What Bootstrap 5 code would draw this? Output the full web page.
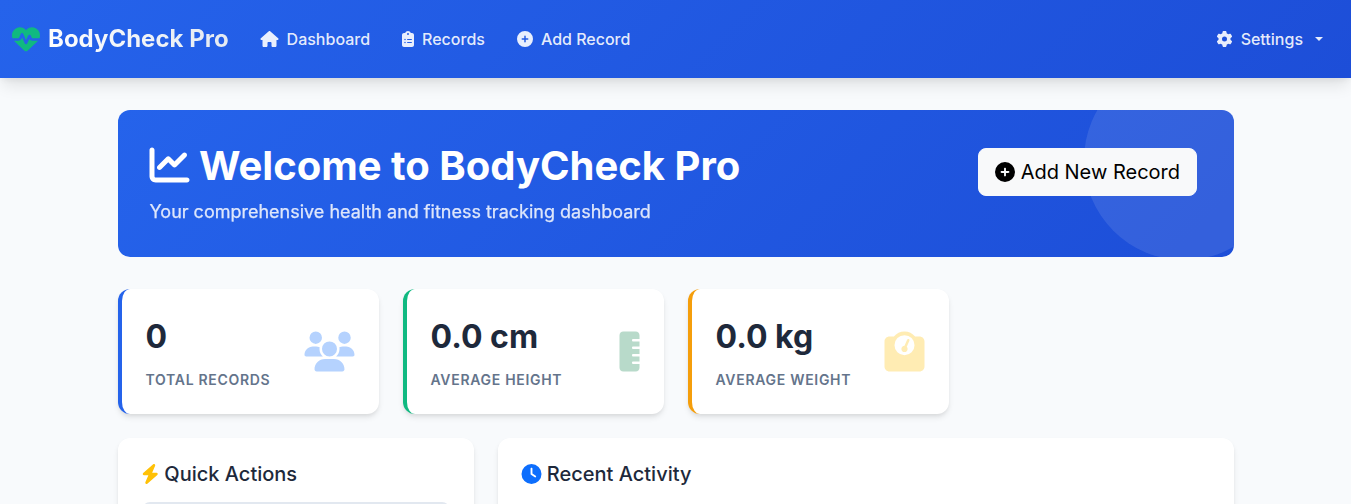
<!DOCTYPE html>
<html lang="en">
<head>
<meta charset="utf-8">
<meta name="viewport" content="width=device-width, initial-scale=1">
<title>BodyCheck Pro</title>
<link href="https://cdn.jsdelivr.net/npm/bootstrap@5.3.0/dist/css/bootstrap.min.css" rel="stylesheet">
<style>
  body { font-family: Inter, "Liberation Sans", sans-serif; background: #f8fafc; color: #1e293b; overflow: hidden; height: 100vh; }
  .ico { height: 1em; width: auto; fill: currentColor; vertical-align: -.125em; overflow: visible; }
  h1 .ico, h5 .ico, .ico.nudge { transform: translateX(-.5px); }
  .app-nav { height: 78px; background: linear-gradient(135deg, #2563eb, #1d4ed8); box-shadow: 0 10px 15px -3px rgba(0,0,0,.1), 0 4px 6px -2px rgba(0,0,0,.05); }
  .app-nav .navbar-brand { font-size: 24px; font-weight: 700; }
  .app-nav .navbar-brand .ico { font-size: 28px; color: #10b981; }
  .brand-text { background: linear-gradient(45deg, #fff, #e2e8f0); -webkit-background-clip: text; background-clip: text; color: transparent; }
  .app-nav .nav-link { color: rgba(255,255,255,.9); font-weight: 500; padding: 8px 16px !important; }
  .app-nav .dropdown-toggle::after { margin-left: 12px; vertical-align: .255em; }
  .hero { background: linear-gradient(135deg, #2563eb, #1d4ed8); border-radius: 12px; padding: 32px; margin: 32px 0; color: #fff; position: relative; overflow: hidden; }
  .hero::before { content: ""; position: absolute; top: -50px; right: -50px; width: 200px; height: 200px; border-radius: 50%; background: rgba(255,255,255,.1); }
  .hero h1 { font-size: 40px; font-weight: 700; }
  .hero-sub { font-size: 18px; opacity: .85; -webkit-text-stroke: .25px currentColor; }
  .hero .btn { margin: 6px 4.5px 0 0; position: relative; }
  .panel { background: #fff; border: 0; border-radius: 12px; box-shadow: 0 4px 6px -1px rgba(0,0,0,.1), 0 2px 4px -1px rgba(0,0,0,.06); }
  .panel .card-body { padding: 24px; }
  .stat { border-left: 4px solid #2563eb; }
  .stat.green { border-left-color: #10b981; }
  .stat.amber { border-left-color: #f59e0b; }
  .stat-num { font-size: 32px; font-weight: 700; line-height: 48px; }
  .stat-label { font-size: 14px; line-height: 21px; font-weight: 600; letter-spacing: .05em; color: #64748b; text-transform: uppercase; margin-top: 8px; }
  .stat .ico { font-size: 40px; opacity: .3; transform: translate(-.5px, -.6px); }
  .panel h5 { font-size: 20px; margin-bottom: 16px; }
  .action { border-radius: 8px; border: 2px solid #e2e8f0; height: 48px; }
</style>
</head>
<body>
<nav class="navbar navbar-expand navbar-dark app-nav py-0">
  <div class="container-fluid">
    <a class="navbar-brand d-flex align-items-center gap-2" href="#">
      <svg class="ico" viewBox="0 0 512 512"><path d="M228.3 469.1L47.6 300.4c-4.2-3.9-8.2-8.1-11.9-12.4h87c22.6 0 43-13.6 51.7-34.5l10.5-25.2 49.3 109.5c3.8 8.5 12.1 14 21.4 14.1s17.8-5 22-13.3L320 253.7l1.7 3.4c9.5 19 28.9 31 50.1 31H476.3c-3.7 4.3-7.7 8.5-11.9 12.4L283.7 469.1c-7.5 7-17.4 10.9-27.7 10.9s-20.2-3.9-27.7-10.9zM503.7 240h-132c-3 0-5.8-1.7-7.2-4.4l-23.2-46.3c-4.1-8.1-12.4-13.3-21.5-13.3s-17.4 5.1-21.5 13.3l-41.4 82.8L205.9 158.2c-3.9-8.7-12.7-14.3-22.2-14.1s-18.1 5.9-21.8 14.8l-31.8 76.3c-1.2 3-4.2 4.9-7.4 4.9H16c-2.6 0-5 .4-7.3 1.1C3 225.2 0 208.2 0 190.9v-5.8c0-69.9 50.5-129.5 119.4-141C165 36.5 211.4 51.4 244 84l12 12 12-12c32.6-32.6 79-47.5 124.6-39.9C461.5 55.6 512 115.2 512 185.1v5.8c0 16.9-2.8 33.5-8.3 49.1z"/></svg>
      <span class="brand-text">BodyCheck Pro</span>
    </a>
    <ul class="navbar-nav me-auto">
      <li class="nav-item"><a class="nav-link" href="#"><svg class="ico nudge me-2" viewBox="0 0 576 512"><path d="M575.8 255.5c0 18-15 32.1-32 32.1h-32l.7 160.2c0 2.7-.2 5.4-.5 8.1V472c0 22.1-17.9 40-40 40H456c-1.1 0-2.2 0-3.3-.1c-1.4 .1-2.8 .1-4.2 .1H416 392c-22.1 0-40-17.9-40-40V448 384c0-17.7-14.3-32-32-32H256c-17.7 0-32 14.3-32 32v64 24c0 22.1-17.9 40-40 40H160 128.1c-1.5 0-3-.1-4.5-.2c-1.2 .1-2.4 .2-3.6 .2H104c-22.1 0-40-17.9-40-40V360c0-.9 0-1.9 .1-2.8V287.6H32c-18 0-32-14-32-32.1c0-9 3-17 10-24L266.4 8c7-7 15-8 22-8s15 2 21 7L564.8 231.5c8 7 12 15 11 24z"/></svg>Dashboard</a></li>
      <li class="nav-item"><a class="nav-link" href="#"><svg class="ico me-2" viewBox="0 0 384 512"><path d="M192 0c-41.8 0-77.4 26.7-90.5 64H64C28.7 64 0 92.7 0 128V448c0 35.3 28.7 64 64 64H320c35.3 0 64-28.7 64-64V128c0-35.3-28.7-64-64-64H282.5C269.4 26.7 233.8 0 192 0zm0 64a32 32 0 1 1 0 64 32 32 0 1 1 0-64zM72 272a24 24 0 1 1 48 0 24 24 0 1 1 -48 0zm104-16H304c8.8 0 16 7.2 16 16s-7.2 16-16 16H176c-8.8 0-16-7.2-16-16s7.2-16 16-16zM72 368a24 24 0 1 1 48 0 24 24 0 1 1 -48 0zm88 0c0-8.8 7.2-16 16-16H304c8.8 0 16 7.2 16 16s-7.2 16-16 16H176c-8.8 0-16-7.2-16-16z"/></svg>Records</a></li>
      <li class="nav-item"><a class="nav-link" href="#"><svg class="ico me-2" viewBox="0 0 512 512"><path d="M256 512A256 256 0 1 0 256 0a256 256 0 1 0 0 512zM232 344V280H168c-13.3 0-24-10.7-24-24s10.7-24 24-24h64V168c0-13.3 10.7-24 24-24s24 10.7 24 24v64h64c13.3 0 24 10.7 24 24s-10.7 24-24 24H280v64c0 13.3-10.7 24-24 24s-24-10.7-24-24z"/></svg>Add Record</a></li>
    </ul>
    <ul class="navbar-nav">
      <li class="nav-item dropdown"><a class="nav-link dropdown-toggle" href="#" data-bs-toggle="dropdown"><svg class="ico nudge me-2" viewBox="0 0 512 512"><path d="M495.9 166.6c3.2 8.7 .5 18.4-6.4 24.6l-43.3 39.4c1.1 8.3 1.7 16.8 1.7 25.4s-.6 17.1-1.7 25.4l43.3 39.4c6.9 6.2 9.6 15.9 6.4 24.6c-4.4 11.9-9.7 23.3-15.8 34.3l-4.7 8.1c-6.6 11-14 21.4-22.1 31.2c-5.9 7.2-15.7 9.6-24.5 6.8l-55.7-17.7c-13.4 10.3-28.2 18.9-44 25.4l-12.5 57.1c-2 9.1-9 16.3-18.2 17.8c-13.8 2.3-28 3.5-42.5 3.5s-28.7-1.2-42.5-3.5c-9.2-1.5-16.2-8.7-18.2-17.8l-12.5-57.1c-15.8-6.5-30.6-15.1-44-25.4L83.1 425.9c-8.8 2.8-18.6 .3-24.5-6.8c-8.1-9.8-15.5-20.2-22.1-31.2l-4.7-8.1c-6.1-11-11.4-22.4-15.8-34.3c-3.2-8.7-.5-18.4 6.4-24.6l43.3-39.4C64.6 273.1 64 264.6 64 256s.6-17.1 1.7-25.4L22.4 191.2c-6.9-6.2-9.6-15.9-6.4-24.6c4.4-11.9 9.7-23.3 15.8-34.3l4.7-8.1c6.6-11 14-21.4 22.1-31.2c5.9-7.2 15.7-9.6 24.5-6.8l55.7 17.7c13.4-10.3 28.2-18.9 44-25.4l12.5-57.1c2-9.1 9-16.3 18.2-17.8C227.3 1.2 241.5 0 256 0s28.7 1.2 42.5 3.5c9.2 1.5 16.2 8.7 18.2 17.8l12.5 57.1c15.8 6.5 30.6 15.1 44 25.4l55.7-17.7c8.8-2.8 18.6-.3 24.5 6.8c8.1 9.8 15.5 20.2 22.1 31.2l4.7 8.1c6.1 11 11.4 22.4 15.8 34.3zM256 336a80 80 0 1 0 0-160 80 80 0 1 0 0 160z"/></svg>Settings</a></li>
    </ul>
  </div>
</nav>

<main class="container">
  <section class="hero d-flex justify-content-between align-items-start">
    <div>
      <h1 class="mb-2"><svg class="ico" viewBox="0 0 512 512"><path d="M64 64c0-17.7-14.3-32-32-32S0 46.3 0 64V400c0 44.2 35.8 80 80 80H480c17.7 0 32-14.3 32-32s-14.3-32-32-32H80c-8.8 0-16-7.2-16-16V64zm406.6 86.6c12.5-12.5 12.5-32.8 0-45.3s-32.8-12.5-45.3 0L320 210.7l-57.4-57.4c-12.5-12.5-32.8-12.5-45.3 0l-112 112c-12.5 12.5-12.5 32.8 0 45.3s32.8 12.5 45.3 0L240 221.3l57.4 57.4c12.5 12.5 32.8 12.5 45.3 0l128-128z"/></svg> Welcome to BodyCheck Pro</h1>
      <p class="hero-sub mb-0">Your comprehensive health and fitness tracking dashboard</p>
    </div>
    <a class="btn btn-light btn-lg" href="#"><svg class="ico" viewBox="0 0 512 512"><path d="M256 512A256 256 0 1 0 256 0a256 256 0 1 0 0 512zM232 344V280H168c-13.3 0-24-10.7-24-24s10.7-24 24-24h64V168c0-13.3 10.7-24 24-24s24 10.7 24 24v64h64c13.3 0 24 10.7 24 24s-10.7 24-24 24H280v64c0 13.3-10.7 24-24 24s-24-10.7-24-24z"/></svg> Add New Record</a>
  </section>

  <div class="row g-4 mb-4">
    <div class="col-3">
      <div class="card panel stat"><div class="card-body d-flex justify-content-between align-items-center">
        <div><div class="stat-num">0</div><div class="stat-label">Total Records</div></div>
        <svg class="ico text-primary" viewBox="0 0 640 512"><path d="M144 0a80 80 0 1 1 0 160A80 80 0 1 1 144 0zM512 0a80 80 0 1 1 0 160A80 80 0 1 1 512 0zM0 298.7C0 239.8 47.8 192 106.7 192h42.7c15.9 0 31 3.5 44.6 9.7c-1.3 7.2-1.9 14.7-1.9 22.3c0 38.2 16.8 72.5 43.3 96c-.2 0-.4 0-.7 0H21.3C9.6 320 0 310.4 0 298.7zM405.3 320c-.2 0-.4 0-.7 0c26.6-23.5 43.3-57.8 43.3-96c0-7.6-.7-15-1.9-22.3c13.6-6.3 28.7-9.7 44.6-9.7h42.7C592.2 192 640 239.8 640 298.7c0 11.8-9.6 21.3-21.3 21.3H405.3zM224 224a96 96 0 1 1 192 0 96 96 0 1 1 -192 0zM128 485.3C128 411.7 187.7 352 261.3 352H378.7C452.3 352 512 411.7 512 485.3c0 14.7-11.9 26.7-26.7 26.7H154.7c-14.7 0-26.7-11.9-26.7-26.7z"/></svg>
      </div></div>
    </div>
    <div class="col-3">
      <div class="card panel stat green"><div class="card-body d-flex justify-content-between align-items-center">
        <div><div class="stat-num">0.0 cm</div><div class="stat-label">Average Height</div></div>
        <svg class="ico text-success" viewBox="0 0 256 512"><path d="M0 48C0 21.5 21.5 0 48 0H208c26.5 0 48 21.5 48 48V96H176c-8.8 0-16 7.2-16 16s7.2 16 16 16h80v64H176c-8.8 0-16 7.2-16 16s7.2 16 16 16h80v64H176c-8.8 0-16 7.2-16 16s7.2 16 16 16h80v64H176c-8.8 0-16 7.2-16 16s7.2 16 16 16h80v48c0 26.5-21.5 48-48 48H48c-26.5 0-48-21.5-48-48V48z"/></svg>
      </div></div>
    </div>
    <div class="col-3">
      <div class="card panel stat amber"><div class="card-body d-flex justify-content-between align-items-center">
        <div><div class="stat-num">0.0 kg</div><div class="stat-label">Average Weight</div></div>
        <svg class="ico text-warning" viewBox="0 0 512 512"><path d="M128 176a128 128 0 1 1 256 0 128 128 0 1 1 -256 0zM391.8 64C359.5 24.9 310.7 0 256 0S152.5 24.9 120.2 64H64C28.7 64 0 92.7 0 128V448c0 35.3 28.7 64 64 64H448c35.3 0 64-28.7 64-64V128c0-35.3-28.7-64-64-64H391.8zM296 224c0-10.6-4.1-20.2-10.9-27.4l33.6-78.3c3.5-8.1-.3-17.5-8.4-21s-17.5 .3-21 8.4L255.7 184c-22 .1-39.7 18-39.7 40c0 22.1 17.9 40 40 40s40-17.9 40-40z"/></svg>
      </div></div>
    </div>
  </div>

  <div class="row g-4">
    <div class="col-4">
      <div class="card panel h-100"><div class="card-body">
        <h5><svg class="ico text-warning" viewBox="0 0 448 512"><path d="M349.4 44.6c5.9-13.7 1.5-29.7-10.6-38.5s-28.6-8-39.9 1.8l-256 224c-10 8.8-13.6 22.9-8.9 35.3S50.7 288 64 288H175.5L98.6 467.4c-5.9 13.7-1.5 29.7 10.6 38.5s28.6 8 39.9-1.8l256-224c10-8.8 13.6-22.9 8.9-35.3s-16.6-20.7-30-20.7H272.5L349.4 44.6z"/></svg> Quick Actions</h5>
        <div class="action"></div>
      </div></div>
    </div>
    <div class="col-8">
      <div class="card panel h-100"><div class="card-body">
        <h5><svg class="ico text-primary" viewBox="0 0 512 512"><path d="M256 0a256 256 0 1 1 0 512A256 256 0 1 1 256 0zM232 120V256c0 8 4 15.5 10.7 20l96 64c11 7.4 25.9 4.4 33.3-6.7s4.4-25.9-6.7-33.3L280 243.2V120c0-13.3-10.7-24-24-24s-24 10.7-24 24z"/></svg> Recent Activity</h5>
      </div></div>
    </div>
  </div>
</main>
<script src="https://cdn.jsdelivr.net/npm/bootstrap@5.3.0/dist/js/bootstrap.bundle.min.js"></script>
</body>
</html>
